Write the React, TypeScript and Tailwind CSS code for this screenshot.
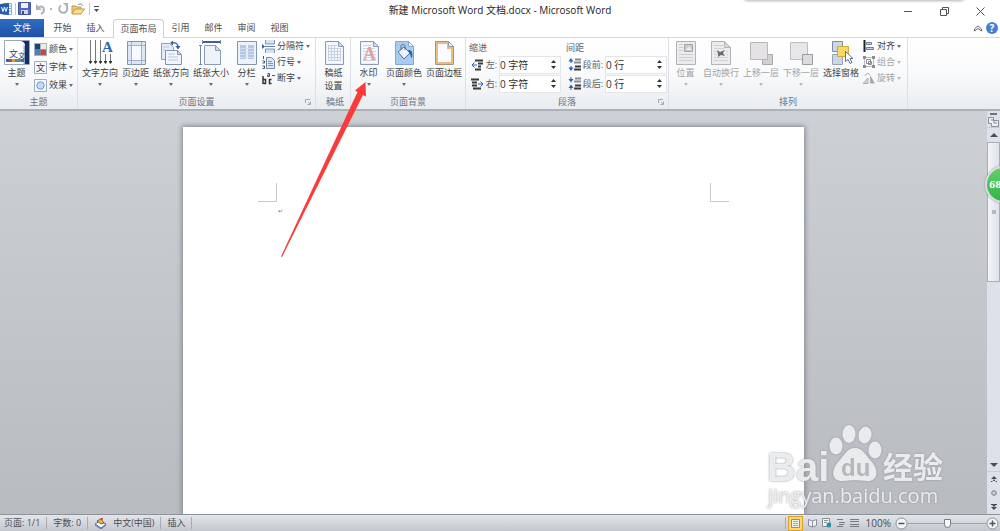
import React from 'react';

const FONT = "font-['Open_Sans','Noto_Sans_CJK_SC',sans-serif]";

interface IconProps {
  w?: number;
  h?: number;
  children: React.ReactNode;
}

const Icon: React.FC<IconProps> = ({ w = 26, h = 26, children }) => (
  <svg width={w} height={h} viewBox={`0 0 ${w} ${h}`} fill="none" aria-hidden="true" className="shrink-0">
    {children}
  </svg>
);

const Caret: React.FC<{ disabled?: boolean }> = ({ disabled }) => (
  <svg width="4" height="3" viewBox="0 0 4 3" aria-hidden="true" className="shrink-0">
    <path d="M0 0h4L2 3z" fill={disabled ? '#b9bbbe' : '#6b6f75'} />
  </svg>
);

// Blank sheet with a folded corner, shared by several ribbon icons
const Sheet = () => (
  <>
    <path d="M4.500 1.500h13l5 5v18h-18z" fill="#eaf0f8" stroke="#8c9cb4" />
    <path d="M6 3h11v4h4v16H6z" fill="#f6f9fd" />
    <path d="M17.500 1.500v5h5z" fill="#cfdaea" stroke="#8c9cb4" />
  </>
);

const ThemeIcon = () => (
  <Icon>
    <path d="M.5.5h25v24H.5z" fill="#fff" stroke="#9aa6ba" />
    <path d="M17 1h8v23h-4V6c0-3-1-4-4-5z" fill="#17315f" />
    <path d="M21 6v18h-1.500V5z" fill="#8fa7cf" />
    <text x="5" y="17" fontSize="9" fill="#27446f">文</text>
    <text x="14" y="18" fontSize="7" fill="#27446f">文</text>
    <path d="M2 19h3v3H2z" fill="#3562a6" />
    <path d="M5 19h3v3H5z" fill="#c64a3e" />
    <path d="M8 19h3v3H8z" fill="#e39a38" />
    <path d="M11 19h3v3h-3z" fill="#5a9a4b" />
    <path d="M14 19h3v3h-3z" fill="#3a9ab8" />
    <path d="M17 19h3v3h-3z" fill="#7856a0" />
  </Icon>
);

const ColorsIcon = () => (
  <Icon w={13} h={13}>
    <path d="M0 0h13v13H0z" fill="#a8b0bb" />
    <path d="M1 1h5.500v5.500H1z" fill="#1d4573" />
    <path d="M6.500 1H12v5.500H6.500z" fill="#efece0" />
    <path d="M1 6.500h5.500V12H1z" fill="#4a7fc0" />
    <path d="M6.500 6.500H12V12H6.500z" fill="#bf4a48" />
  </Icon>
);

const FontsIcon = () => (
  <Icon w={13} h={13}>
    <path d="M.5.5h12v12H.5z" fill="#f6f8fc" stroke="#a0abbf" />
    <text x="2" y="10" fontSize="9" fill="#334">文</text>
  </Icon>
);

const EffectsIcon = () => (
  <Icon w={13} h={13}>
    <path d="M.5.5h12v12H.5z" fill="#f6f8fc" stroke="#a4adbd" />
    <circle cx="6.5" cy="6.500" r="3.700" fill="#c4dcf8" stroke="#6d98d6" />
  </Icon>
);

const TextDirectionIcon = () => (
  <Icon>
    <path d="M3.500 0v21M8.500 0v21M13.500 0v21M18.500 14v7M23.500 14v7" stroke="#77797e" />
    <path d="M2 21h3v1l-1.500 2L2 22zM7 21h3v1l-1.500 2L7 22zM12 21h3v1l-1.500 2-1.500-2zM17 21h3v1l-1.500 2-1.500-2zM22 21h3v1l-1.500 2-1.500-2z" fill="#333" />
    <text x="15" y="12" fontSize="15" fontWeight="700" fontFamily="Liberation Serif" fill="#2f66ae">A</text>
  </Icon>
);

const MarginsIcon = () => (
  <Icon>
    <path d="M4.500 1.500h18v23h-18z" fill="#dce7f5" stroke="#8294b0" />
    <path d="M8 5h11v15H8z" fill="#f6f9fd" />
    <path d="M8.500 2v22M18.500 2v22M5 5.500h17M5 20.500h17" stroke="#9db1cd" />
  </Icon>
);

const OrientationIcon = () => (
  <Icon>
    <path d="M3.500 3.500h8l4 4v12h-12z" fill="#e4ecf7" stroke="#8c9cb4" />
    <path d="M7.500 10.500h12l4 4v10h-16z" fill="#f1f5fb" stroke="#8294b0" />
    <path d="M19.500 10.500v4h4z" fill="#cfdaea" stroke="#8294b0" />
    <path d="M5 7h6M5 10h2M10 14h7M10 17h10M10 20h10" stroke="#b7c7dd" />
    <path d="M14 3c4-1 6 1 6 4" stroke="#53719f" strokeWidth="1.500" />
    <path d="M17.500 6h5L20 9.500zM12 3l3-2.500v5z" fill="#3d5f91" />
  </Icon>
);

const SizeIcon = () => (
  <Icon>
    <path d="M5 2h17" stroke="#3f60a0" strokeWidth="2" />
    <path d="M4.500 0v4M22.500 0v4M1 5.500h3M1 24.500h3M2.500 5v19" stroke="#7289b3" />
    <path d="M6.500 5.500h11l5 5v14h-16z" fill="#eef3fa" stroke="#8c9cb4" />
    <path d="M17.500 5.500v5h5z" fill="#cfdaea" stroke="#8c9cb4" />
  </Icon>
);

const ColumnsIcon = () => (
  <Icon>
    <path d="M3.500 1.500h19v23h-19z" fill="#edf3fb" stroke="#8294b0" />
    <path d="M6 5h6v14H6zM14 5h6v14h-6z" fill="#b3c7e3" />
    <path d="M6 8.500h14M6 11.500h14M6 14.500h14M6 17.500h14" stroke="#d3dff0" />
  </Icon>
);

const BreaksIcon = () => (
  <Icon w={13} h={13}>
    <path d="M3.500 0v4h9V0M3.500 13V9h9v4" fill="#d5e2f3" stroke="#7f96b8" />
    <path d="M3 6.500h10" stroke="#5f7ba6" />
    <path d="M0 4l3 2.500L0 9z" fill="#2d63b5" />
  </Icon>
);

const LineNumbersIcon = () => (
  <Icon w={13} h={13}>
    <path d="M4.500 1.500h5l3 3v8h-8z" fill="#dce7f5" stroke="#7289b0" />
    <path d="M6 5.500h4M6 7.500h5M6 9.500h5" stroke="#7e99c2" />
    <path d="M1.500 0v3M.5 5h2v2h-2M.5 10h2v2.500h-2" stroke="#4a5468" />
  </Icon>
);

const HyphenIcon = () => (
  <Icon w={13} h={13}>
    <path d="M1 4v8M1.500 7.500h2v4h-2M9.500 7.500h-2v4h2" stroke="#333" strokeWidth="1.500" />
    <path d="M5.500 1.500h2v3h-2v-1.500h2M10 3.500h3" stroke="#555" />
  </Icon>
);

const GridPaperIcon = () => (
  <Icon>
    <Sheet />
    <path d="M7 5.500h9M7 8.500h13M7 11.500h13M7 14.500h13M7 17.500h13M7 20.500h13M7.500 5v16M10.500 5v16M13.500 5v16M16.500 8v13M19.500 8v13" stroke="#c3d0e3" />
  </Icon>
);

const WatermarkIcon = () => (
  <Icon>
    <Sheet />
    <path d="M7 5.500h9M7 8.500h12M7 11.500h13M7 14.500h13M7 17.500h13M7 20.500h13" stroke="#ccd6e4" />
    <text x="7" y="20" fontSize="18" fontFamily="Liberation Serif" fontWeight="700" fill="#e3a09d">A</text>
  </Icon>
);

const PageColorIcon = () => (
  <Icon>
    <path d="M4.500 1.500h13l5 5v18h-18z" fill="#a5cdf3" stroke="#86a8d2" />
    <path d="M17.500 1.500v5h5z" fill="#eef5fc" stroke="#86a8d2" />
    <path d="M7 12l6-5 6 6-6 6z" fill="#eef1f6" stroke="#5d6e88" />
    <path d="M10 10V6c0-2 4-2 4 0v4" stroke="#5d6e88" />
    <path d="M17 10c4 0 5 2 4 8-2-1-1-4-3-5z" fill="#2464b4" />
  </Icon>
);

const PageBorderIcon = () => (
  <Icon>
    <path d="M4.500 1.500h13l5 5v18h-18z" fill="#e9bc87" stroke="#a89478" />
    <path d="M7 4h9v5h4v13H7z" fill="#fbfcfe" />
    <path d="M17.500 1.500v5h5z" fill="#f5f8fc" stroke="#9b9792" />
  </Icon>
);

const PositionIcon = () => (
  <Icon>
    <path d="M3.500 1.500h19v23h-19z" fill="#ecebed" stroke="#b4b2b6" />
    <path d="M6 4.500h4M6 7.500h4M6 10.500h4M6 14.500h14M6 17.500h14M6 20.500h14" stroke="#cfcdd1" />
    <path d="M11.500 4.500h8v7h-8z" fill="#cdcbcf" stroke="#a5a3a7" />
    <path d="M13 10l3-4 3 4z" fill="#e9e8ea" />
  </Icon>
);

const WrapIcon = () => (
  <Icon>
    <path d="M3.500 1.500h13l6 6v17h-19z" fill="#ecebed" stroke="#b4b2b6" />
    <path d="M16.500 1.500v6h6z" fill="#d8d6da" stroke="#b4b2b6" />
    <path d="M6 5.500h9M6 8.500h10M6 11.500h3M18 11.500h2M6 14.500h3M18 14.500h2M6 17.500h14M6 20.500h14" stroke="#d2d0d4" />
    <path d="M9 10l3 2 5-2-2 3 2 3-4-1-3 2v-3z" fill="#6b6a6d" />
  </Icon>
);

const ForwardIcon = () => (
  <Icon>
    <path d="M14.500 14.500h10v10h-10z" fill="#d3d1d5" stroke="#aaa8ac" />
    <path d="M2.500 2.500h17v17h-17z" fill="#e4e2e5" stroke="#b9b7bb" />
  </Icon>
);

const BackwardIcon = () => (
  <Icon>
    <path d="M2.500 2.500h17v17h-17z" fill="#e8e6e9" stroke="#c0bec2" />
    <path d="M14.500 14.500h10v10h-10z" fill="#dddbdf" stroke="#9c9a9e" />
  </Icon>
);

const SelectionPaneIcon = () => (
  <Icon>
    <path d="M4.500 1.500h10v10h-10z" fill="#ccd7e6" stroke="#7d8da6" />
    <path d="M4.500 14.500h10v10h-10z" fill="#ccd7e6" stroke="#96a3b7" />
    <path d="M9.500 6.500h11v10h-11z" fill="#f7d963" stroke="#d0aa40" />
    <path d="M17.500 11.500v10l2.500-2 2 4 2-1-2-4h3z" fill="#fff" stroke="#5f7395" />
  </Icon>
);

const AlignIcon = () => (
  <Icon w={12} h={12}>
    <path d="M1.500 0v12" stroke="#222" strokeWidth="2" />
    <path d="M3.500 2.500h5v2h-5zM3.500 7.500h7v2h-7z" fill="#c9d5e6" stroke="#6a7d9c" />
  </Icon>
);

const GroupIcon = () => (
  <Icon w={12} h={12}>
    <path d="M1.500 1.500h9v9h-9z" stroke="#bab9bc" />
    <path d="M3.500 3.500h4v4h-4zM5.500 5.500h3v3h-3z" stroke="#8d8c8f" />
    <path d="M0 0h3v3H0zM9 0h3v3H9zM0 9h3v3H0zM9 9h3v3H9z" fill="#8d8c8f" />
  </Icon>
);

const RotateIcon = () => (
  <Icon w={12} h={12}>
    <path d="M0 11.500L5 6v5.500z" fill="#d6d5d8" stroke="#b0afb2" />
    <path d="M7 11.500V3l5 8.500z" fill="#a9a8ab" />
    <path d="M2 4c1-3 4-3 5-1" stroke="#a4a3a6" />
  </Icon>
);

const indentLines: Record<string, React.ReactNode> = {
  left: (
    <>
      <path d="M4 2.500h8M7 5.500h5M7 8.500h3M4 11.500h6" stroke="#3a3a3a" strokeWidth="2" />
      <path d="M1 7h5M3.500 4.500L1 7l2.500 2.500" stroke="#2d63b5" />
    </>
  ),
  right: (
    <>
      <path d="M0 2.500h8M1 5.500h5M1 8.500h5M2 11.500h8" stroke="#3a3a3a" strokeWidth="2" />
      <path d="M7 7h5M9.500 4.500L12 7 9.500 9.500" stroke="#2d63b5" />
    </>
  ),
  before: (
    <>
      <path d="M7 1.500h6M6 4.500h7" stroke="#8a8d92" strokeWidth="2" />
      <path d="M7 8.500h6M6 11.500h7" stroke="#3a3a3a" strokeWidth="2" />
      <path d="M3 0l2.500 3.500h-5zM3 13L.5 9.500h5z" fill="#2d63b5" />
      <path d="M3 3v2M3 8v2" stroke="#2d63b5" />
    </>
  ),
  after: (
    <>
      <path d="M7 1.500h6M6 4.500h7" stroke="#8a8d92" strokeWidth="2" />
      <path d="M7 8.500h6M6 11.500h7" stroke="#3a3a3a" strokeWidth="2" />
      <path d="M3 5.500L.5 2h5zM3 7.500L5.500 11h-5z" fill="#2d63b5" />
      <path d="M3 0v2M3 11v2" stroke="#2d63b5" />
    </>
  ),
};

interface BigButtonProps {
  icon: React.ReactNode;
  label: React.ReactNode;
  narrow?: boolean;
  disabled?: boolean;
  caret?: boolean;
}

const BigButton: React.FC<BigButtonProps> = ({ icon, label, narrow, disabled, caret = true }) => (
  <button
    type="button"
    disabled={disabled}
    className={`flex shrink-0 flex-col items-center whitespace-nowrap pt-0.5 ${narrow ? 'w-[31px]' : 'w-[40px]'} ${
      disabled ? 'text-[#a2a4a7]' : 'text-[#3b3e42]'
    }`}
  >
    {icon}
    <span className="leading-[13px]">{label}</span>
    {caret && (
      <span className="flex h-[10px] items-center">
        <Caret disabled={disabled} />
      </span>
    )}
  </button>
);

interface SmallButtonProps {
  icon: React.ReactNode;
  label: string;
  disabled?: boolean;
}

const SmallButton: React.FC<SmallButtonProps> = ({ icon, label, disabled }) => (
  <button
    type="button"
    disabled={disabled}
    className={`flex items-center gap-0.5 whitespace-nowrap ${disabled ? 'text-[#a2a4a7]' : 'text-[#3b3e42]'}`}
  >
    {icon}
    <span>{label}</span>
    <Caret disabled={disabled} />
  </button>
);

interface GroupProps {
  title: string;
  width: string;
  launcher?: boolean;
  children: React.ReactNode;
}

const Group: React.FC<GroupProps> = ({ title, width, launcher, children }) => (
  <section className={`flex shrink-0 flex-col border-r border-[#dcdfe4] ${width}`}>
    <div className="flex flex-1">{children}</div>
    <div className="grid grid-cols-[10px_1fr_10px] items-center leading-[14px] text-[#6c7480]">
      <h2 className="col-start-2 whitespace-nowrap text-center">{title}</h2>
      {launcher && (
        <button type="button" aria-label={`${title} 对话框`}>
          <svg width="6" height="6" viewBox="0 0 6 6" fill="none">
            <path d="M.5 4V.5H5M3 3l2 2M5.500 2.500v3h-3" stroke="#a3a9b2" />
          </svg>
        </button>
      )}
    </div>
  </section>
);

interface SpinnerProps {
  id: string;
  icon: string;
  label: string;
  value: string;
}

const Spinner: React.FC<SpinnerProps> = ({ id, icon, label, value }) => (
  <div className="flex h-[19px] items-center justify-end">
    <Icon w={13} h={13}>{indentLines[icon]}</Icon>
    <label htmlFor={id} className="mx-0.5 whitespace-nowrap text-[#5b6068]">{label}</label>
    <div className="flex h-[18px] w-[62px] border border-[#e3e5e8] bg-white">
      <input id={id} defaultValue={value} className="w-0 flex-1 text-[10px] leading-4 text-[#2d2d2d] outline-none" />
      <div className="flex w-[13px] flex-col items-center justify-evenly">
        <button type="button" aria-label="增加">
          <svg width="5" height="3" viewBox="0 0 5 3" className="block"><path d="M0 3h5L2.500 0z" fill="#333" /></svg>
        </button>
        <button type="button" aria-label="减少">
          <svg width="5" height="3" viewBox="0 0 5 3" className="block"><path d="M0 0h5L2.500 3z" fill="#333" /></svg>
        </button>
      </div>
    </div>
  </div>
);

const TitleBar = () => (
  <header className="grid h-[19px] grid-cols-[1fr_auto_1fr] items-center">
    <div className="flex items-center pb-0.5">
      <svg width="13" height="14" viewBox="0 0 13 14" className="shrink-0">
        <path d="M3.500 1.500h8v11h-8z" fill="#fff" stroke="#8fabd6" />
        <path d="M8 4h3M8 6.500h3M8 9h3" stroke="#7aa0d8" />
        <path d="M0 2l9-1v12l-9-1z" fill="#2a5cae" />
        <path d="M1.500 5L3 9.500 4.500 5 6 9.500 7.500 5" fill="none" stroke="#fff" />
      </svg>
      <span className="ml-0.5 h-3 w-px bg-[#c4c7cc]" />
      <button type="button" aria-label="保存" className="ml-0.5">
        <svg width="13" height="13" viewBox="0 0 13 13" className="block">
          <path d="M.5.5h12v12H.5z" fill="#5468c0" stroke="#4253a6" />
          <path d="M3 1h7v5H3z" fill="#eef2fb" />
          <path d="M3 8h7v4H3z" fill="#cfd6ea" />
          <path d="M4 9h2v3H4z" fill="#37489a" />
        </svg>
      </button>
      <button type="button" aria-label="撤消" disabled className="ml-1">
        <svg width="11" height="12" viewBox="0 0 11 12" fill="none" className="block">
          <path d="M3 5c3-3 6-1 6 2 0 2-1 3-3 4" stroke="#b0b3ba" strokeWidth="2" />
          <path d="M1 1v6h6z" fill="#b0b3ba" />
        </svg>
      </button>
      <span className="ml-1 size-[2px] bg-[#b4b7bd]" />
      <button type="button" aria-label="重复" disabled className="ml-1.5">
        <svg width="11" height="12" viewBox="0 0 11 12" fill="none" className="block">
          <path d="M3 2.500a4 4 0 1 0 5.500 1" stroke="#b0b3ba" strokeWidth="2" />
          <path d="M5 0h5v5z" fill="#b0b3ba" />
        </svg>
      </button>
      <button type="button" aria-label="打开" className="ml-0.5">
        <svg width="14" height="12" viewBox="0 0 14 12" className="block">
          <path d="M1 11V3h4l1 1h4v2" fill="#f2cc6b" stroke="#c29a48" />
          <path d="M1 11l3-5h9.500L10 11z" fill="#fbe08f" stroke="#c29a48" />
          <path d="M7 2c2-2 4-1 5 1" fill="none" stroke="#5d86bd" />
        </svg>
      </button>
      <span className="ml-1 h-3 w-px bg-[#c4c7cc]" />
      <button type="button" aria-label="自定义快速访问工具栏" className="ml-1">
        <svg width="5" height="6" viewBox="0 0 5 6" className="block"><path d="M0 0h5v1H0zM0 3h5L2.500 6z" fill="#4a4d52" /></svg>
      </button>
    </div>
    <h1 className="whitespace-nowrap text-[10px] text-[#1c1c1c]">新建 Microsoft Word 文档.docx - Microsoft Word</h1>
    <div className="flex items-center justify-end gap-[27px] pr-[15px] pt-1">
      <button type="button" aria-label="最小化">
        <svg width="9" height="9" viewBox="0 0 9 9" className="block"><path d="M0 4.500h8" stroke="#555" /></svg>
      </button>
      <button type="button" aria-label="还原">
        <svg width="9" height="9" viewBox="0 0 9 9" fill="none" className="block"><path d="M.5 2.500h6v6h-6zM2.500 2.500v-2h6v6h-2" stroke="#555" /></svg>
      </button>
      <button type="button" aria-label="关闭">
        <svg width="9" height="9" viewBox="0 0 9 9" className="block"><path d="M.5.5l8 8M8.500.5l-8 8" stroke="#555" /></svg>
      </button>
    </div>
  </header>
);

const TabRow = () => (
  <nav className="flex h-[19px] items-stretch border-b border-[#d5d8dd] text-[#4b4f55]">
    <button type="button" className="w-[44px] bg-linear-to-b from-[#2f6cc4] to-[#1d51a5] text-white">文件</button>
    <div className="ml-0.5 flex">
      {['开始', '插入'].map((tab) => (
        <button key={tab} type="button" className="w-[33px]">{tab}</button>
      ))}
    </div>
    <button type="button" className="-mb-px ml-px w-[51px] rounded-t-sm border border-b-0 border-[#ccd0d6] bg-white">页面布局</button>
    {['引用', '邮件', '审阅', '视图'].map((tab) => (
      <button key={tab} type="button" className="w-[33px]">{tab}</button>
    ))}
    <div className="ml-auto flex items-center gap-1 pr-0.5">
      <button type="button" aria-label="功能区最小化">
        <svg width="8" height="7" viewBox="0 0 8 7" fill="none" className="block">
          <path d="M.5 4L4 .8 7.500 4v2L4 3.500.5 6z" stroke="#62666c" />
        </svg>
      </button>
      <button
        type="button"
        aria-label="帮助"
        className="size-3 rounded-full bg-[#4580cf] text-[10px] font-bold leading-3 text-white"
      >
        ?
      </button>
    </div>
  </nav>
);

const Ribbon = () => (
  <div className="flex h-[73px] shrink-0 overflow-hidden border-b-2 border-[#adb2b9] bg-linear-to-b from-white via-[#f9fafb] to-[#e9ecf0]">
    <Group title="主题" width="w-[78px]">
      <div className="ml-px flex">
        <BigButton icon={<ThemeIcon />} label="主题" narrow />
      </div>
      <div className="ml-0.5 flex flex-col pt-0.5 [&>button]:h-[18px]">
        <SmallButton icon={<ColorsIcon />} label="颜色" />
        <SmallButton icon={<FontsIcon />} label="字体" />
        <SmallButton icon={<EffectsIcon />} label="效果" />
      </div>
    </Group>
    <Group title="页面设置" width="w-[238px]" launcher>
      <div className="ml-0.5 flex">
        <BigButton icon={<TextDirectionIcon />} label="文字方向" />
        <BigButton icon={<MarginsIcon />} label="页边距" narrow />
        <BigButton icon={<OrientationIcon />} label="纸张方向" />
        <BigButton icon={<SizeIcon />} label="纸张大小" />
        <BigButton icon={<ColumnsIcon />} label="分栏" narrow />
      </div>
      <div className="flex flex-col [&>button]:h-4">
        <SmallButton icon={<BreaksIcon />} label="分隔符" />
        <SmallButton icon={<LineNumbersIcon />} label="行号" />
        <SmallButton icon={<HyphenIcon />} label="断字" />
      </div>
    </Group>
    <Group title="稿纸" width="w-[35px]">
      <div className="ml-0.5 flex">
        <BigButton icon={<GridPaperIcon />} label={<>稿纸<br />设置</>} narrow caret={false} />
      </div>
    </Group>
    <Group title="页面背景" width="w-[115px]">
      <div className="ml-0.5 flex">
        <BigButton icon={<WatermarkIcon />} label="水印" narrow />
        <BigButton icon={<PageColorIcon />} label="页面颜色" />
        <BigButton icon={<PageBorderIcon />} label="页面边框" caret={false} />
      </div>
    </Group>
    <Group title="段落" width="w-[203px]" launcher>
      <fieldset className="ml-[3px] w-[92px] pt-0.5">
        <legend className="contents text-[#5b6068]"><span className="block leading-[15px]">缩进</span></legend>
        <Spinner id="indent-left" icon="left" label="左:" value="0 字符" />
        <Spinner id="indent-right" icon="right" label="右:" value="0 字符" />
      </fieldset>
      <fieldset className="ml-[5px] w-[101px] pt-0.5">
        <legend className="contents text-[#5b6068]"><span className="block leading-[15px]">间距</span></legend>
        <Spinner id="space-before" icon="before" label="段前:" value="0 行" />
        <Spinner id="space-after" icon="after" label="段后:" value="0 行" />
      </fieldset>
    </Group>
    <Group title="排列" width="w-[239px]">
      <div className="ml-px flex">
        <BigButton icon={<PositionIcon />} label="位置" narrow disabled />
        <BigButton icon={<WrapIcon />} label="自动换行" disabled />
        <BigButton icon={<ForwardIcon />} label="上移一层" disabled />
        <BigButton icon={<BackwardIcon />} label="下移一层" disabled />
        <BigButton icon={<SelectionPaneIcon />} label="选择窗格" caret={false} />
      </div>
      <div className="ml-0.5 flex flex-col [&>button]:h-4">
        <SmallButton icon={<AlignIcon />} label="对齐" />
        <SmallButton icon={<GroupIcon />} label="组合" disabled />
        <SmallButton icon={<RotateIcon />} label="旋转" disabled />
      </div>
    </Group>
  </div>
);

const ScrollBar = () => (
  <aside className="flex w-[13px] shrink-0 flex-col items-center bg-[#dde1e9]">
    <span className="mt-0.5 h-0.5 w-[7px] bg-[#6e7178]" />
    <button type="button" aria-label="标尺" className="mt-px">
      <svg width="11" height="11" viewBox="0 0 11 11" fill="none" className="block">
        <path d="M.5 1.500h5v3h5v6h-7v-3h-3z" fill="#eceef3" stroke="#8c9098" />
        <path d="M3 4h3v3h3" stroke="#a07f86" />
      </svg>
    </button>
    <button type="button" aria-label="向上滚动" className="flex h-[15px] w-full items-center justify-center border-t border-[#c9cdd5]">
      <svg width="8" height="4" viewBox="0 0 8 4"><path d="M0 4h8L4 0z" fill="#4a4d52" /></svg>
    </button>
    <div className="flex h-[140px] w-full items-center justify-center border border-[#a9aeb8] bg-linear-to-r from-[#f4f5f8] to-[#dfe2e8]">
      <span className="size-1 bg-[#b6b9bf]" />
    </div>
    <button type="button" aria-label="向下滚动" className="mt-auto flex w-full justify-center border-b border-[#c9cdd5] pb-1">
      <svg width="8" height="4" viewBox="0 0 8 4"><path d="M0 0h8L4 4z" fill="#4a4d52" /></svg>
    </button>
    <div className="flex flex-col items-center gap-2 pt-1 pb-1">
      <button type="button" aria-label="前一页">
        <svg width="6" height="6" viewBox="0 0 6 6" className="block"><path d="M0 3h6L3 0zM1 6h4L3 3zM0 5h6v1H0z" fill="#4a4d52" /></svg>
      </button>
      <button type="button" aria-label="选择浏览对象">
        <svg width="6" height="6" viewBox="0 0 6 6" className="block"><circle cx="3" cy="3" r="2.300" fill="#c9ccd2" stroke="#7c8087" /></svg>
      </button>
      <button type="button" aria-label="下一页">
        <svg width="6" height="6" viewBox="0 0 6 6" className="block"><path d="M0 0h6v1H0zM1 1h4L3 3zM0 3h6L3 6z" fill="#4a4d52" /></svg>
      </button>
    </div>
  </aside>
);

const BaiduMark = () => (
  <svg
    width="190"
    height="90"
    viewBox="0 0 190 90"
    aria-hidden="true"
    className="absolute right-[33px] bottom-0 font-['Open_Sans','Noto_Sans_CJK_SC',sans-serif] drop-shadow-[0_0_1px_#8e9298]"
  >
    <g fill="#f1f2f3" opacity="0.92">
      <text x="3" y="57" fontSize="40" fontWeight="700" fontFamily="Liberation Sans">Bai</text>
      <ellipse cx="72" cy="22" rx="6.500" ry="8.500" />
      <ellipse cx="85" cy="10" rx="6.500" ry="9" />
      <ellipse cx="101" cy="11" rx="6.500" ry="8.500" transform="rotate(12 101 11)" />
      <ellipse cx="111" cy="26" rx="6.500" ry="8.500" />
      <path d="M91 24c8 0 11 8 16 13 9 10 6 20-3 20-5 0-8-1-13-1s-8 1-13 1c-10 0-12-10-3-20 5-5 8-13 16-13z" />
      <text x="119" y="54" fontSize="30" fontWeight="700">经验</text>
      <text x="4" y="79" fontSize="20" fontWeight="500">jingyan.baidu.com</text>
    </g>
    <text x="77" y="52" fontSize="24" fontWeight="700" fontFamily="Liberation Sans" fill="#b4b8bd">du</text>
  </svg>
);

const Workspace = () => (
  <div className="flex min-h-0 flex-1 bg-linear-to-b from-[#cdd1d6] to-[#b8bbc0]">
    <main className="relative flex flex-1 overflow-hidden pt-4">
      <article className="mx-auto w-[621px] bg-white px-[75px] pt-14 shadow-[0_0_5px_1px_#7f858d]">
        <div className="flex justify-between">
          <span className="size-[19px] border-r border-b border-[#c9c9c9]" />
          <span className="size-[19px] border-b border-l border-[#c9c9c9]" />
        </div>
        <p className="pl-5 text-[6px] leading-[18px] text-[#777]">↵</p>
      </article>
      <BaiduMark />
    </main>
    <ScrollBar />
  </div>
);

const Divider = () => <span className="h-3 w-px shrink-0 bg-[#a8acb2]" />;

const views = [
  {
    label: '阅读版式',
    art: <path d="M.5 1.500L4.500 3v6L.5 7.500zM8.500 1.500L4.500 3v6l4-1.500z" fill="#f2f3f5" stroke="#8a8e95" />,
  },
  {
    label: 'Web 版式',
    art: (
      <>
        <path d="M.5.5h7v8h-7z" fill="#f2f3f5" stroke="#8a8e95" />
        <path d="M2 2.500h4M2 4.500h3" stroke="#8a8e95" />
        <circle cx="7" cy="7" r="2.500" fill="#2f8f9e" />
      </>
    ),
  },
  { label: '大纲', art: <path d="M1 1.500h6M3 4.500h6M3 6.500h5M1 8.500h6" stroke="#777b82" /> },
  { label: '草稿', art: <path d="M0 1.500h9M0 3.500h9M0 6.500h9M0 8.500h9" stroke="#777b82" /> },
];

const StatusBar = () => (
  <footer className="flex h-[17px] shrink-0 items-center border-t border-[#8f949b] bg-linear-to-b from-[#e3e6ea] to-[#c3c7cd] text-[#4a4e54]">
    <div className="flex items-center gap-1.5 whitespace-nowrap pl-1">
      <span>页面: 1/1</span>
      <Divider />
      <span>字数: 0</span>
      <Divider />
      <svg width="13" height="11" viewBox="0 0 13 11" className="shrink-0">
        <path d="M1 6l5-3 6 3-5 4z" fill="#fff" stroke="#4b72b5" />
        <path d="M1 7l6 4 5-4" fill="none" stroke="#4b72b5" />
        <path d="M3 3l4-2 3 4-3 1z" fill="#e9b94f" stroke="#8a5a2c" />
        <path d="M6 0h3v2z" fill="#c4463a" />
      </svg>
      <span>中文(中国)</span>
      <Divider />
      <span>插入</span>
      <Divider />
    </div>
    <div className="ml-auto flex items-center pr-px">
      <Divider />
      <button type="button" aria-label="页面视图" className="ml-0.5 flex size-[15px] items-center justify-center border border-[#d9a02c] bg-[#fbd872]">
        <svg width="9" height="9" viewBox="0 0 9 9" fill="none">
          <path d="M.5.5h8v8h-8z" fill="#eef0f2" stroke="#8a8e95" />
          <path d="M2 2.500h5M2 4.500h5M2 6.500h5" stroke="#a3a7ad" />
        </svg>
      </button>
      <div className="ml-[3px] flex">
        {views.map((view) => (
          <button key={view.label} type="button" aria-label={view.label} className="flex w-[14px] justify-center">
            <svg width="9" height="10" viewBox="0 0 9 10" fill="none" className="block">{view.art}</svg>
          </button>
        ))}
      </div>
      <span className="ml-1 text-[10px]">100%</span>
      <button type="button" aria-label="缩小" className="ml-1">
        <svg width="13" height="13" viewBox="0 0 13 13" className="block">
          <circle cx="6.5" cy="6.500" r="5.500" fill="#f4f5f6" stroke="#8a8e95" />
          <path d="M3.500 6.500h6" stroke="#555" strokeWidth="1.500" />
        </svg>
      </button>
      <input
        type="range"
        aria-label="显示比例"
        defaultValue={50}
        className="h-3 w-[78px] appearance-none bg-transparent [&::-webkit-slider-runnable-track]:h-px [&::-webkit-slider-runnable-track]:bg-[#a0a4aa] [&::-webkit-slider-thumb]:-mt-1 [&::-webkit-slider-thumb]:h-[9px] [&::-webkit-slider-thumb]:w-[7px] [&::-webkit-slider-thumb]:appearance-none [&::-webkit-slider-thumb]:rounded-b-sm [&::-webkit-slider-thumb]:border [&::-webkit-slider-thumb]:border-[#777b82] [&::-webkit-slider-thumb]:bg-[#f6f7f8]"
      />
      <button type="button" aria-label="放大">
        <svg width="13" height="13" viewBox="0 0 13 13" className="block">
          <circle cx="6.5" cy="6.500" r="5.500" fill="#f4f5f6" stroke="#8a8e95" />
          <path d="M3.500 6.500h6M6.500 3.500v6" stroke="#555" strokeWidth="1.500" />
        </svg>
      </button>
    </div>
  </footer>
);

const App: React.FC = () => {
  return (
    <div className={`relative flex h-screen flex-col overflow-hidden bg-white text-[9px] leading-[14px] ${FONT}`}>
      <TitleBar />
      <TabRow />
      <Ribbon />
      <Workspace />
      <StatusBar />

      {/* Edge of the window docked above */}
      <div className="absolute right-[37px] -top-1 h-1 w-[218px] rounded-sm bg-white shadow-[0_0_3px_1px_#b5b5b5]" />

      {/* Pointer to the watermark button */}
      <svg width="90" height="176" viewBox="0 0 90 176" aria-hidden="true" className="absolute left-[280px] top-[82px]">
        <path d="M85.500 0L75 8.500l2.500 1.500L1 174.500l1 .5L83 13l3 1.500z" fill="#fb3a3a" />
      </svg>

      <div className="absolute -right-[22px] top-[166px] flex size-[37px] items-center rounded-full border-2 border-[#d9dcdd] bg-linear-to-b from-[#5fd06c] to-[#2fb445] pl-0.5 font-['DejaVu_Serif',serif] font-bold text-white shadow-[0_0_2px_#777]">
        68
      </div>
    </div>
  );
};

export default App;
